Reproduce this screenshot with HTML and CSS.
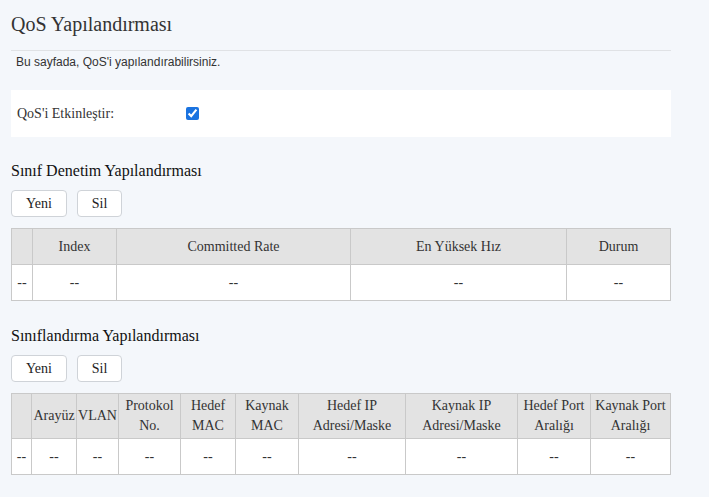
FILE: index.html
```html
<!DOCTYPE html>
<html lang="tr">
<head>
    <meta charset="UTF-8">
    <meta name="viewport" content="width=device-width, initial-scale=1.0">
    <title>QoS Yapılandırması</title>
    <link rel="stylesheet" href="styles.css">
</head>
<body>
    <div class="page">
        <h1 class="page-title">QoS Yapılandırması</h1>
        <p class="page-desc">Bu sayfada, QoS'i yapılandırabilirsiniz.</p>

        <div class="panel">
            <label class="field-label" for="qos-enable">QoS'i Etkinleştir:</label>
            <input type="checkbox" id="qos-enable" checked>
        </div>

        <h2 class="section-title first">Sınıf Denetim Yapılandırması</h2>
        <div class="actions">
            <button type="button" class="btn">Yeni</button>
            <button type="button" class="btn">Sil</button>
        </div>
        <table class="grid">
            <colgroup>
                <col class="w-21">
                <col class="w-84">
                <col class="w-234">
                <col class="w-216">
                <col class="w-104">
            </colgroup>
            <thead>
                <tr>
                    <th></th>
                    <th>Index</th>
                    <th>Committed Rate</th>
                    <th>En Yüksek Hız</th>
                    <th>Durum</th>
                </tr>
            </thead>
            <tbody>
                <tr>
                    <td>--</td>
                    <td>--</td>
                    <td>--</td>
                    <td>--</td>
                    <td>--</td>
                </tr>
            </tbody>
        </table>

        <h2 class="section-title">Sınıflandırma Yapılandırması</h2>
        <div class="actions">
            <button type="button" class="btn">Yeni</button>
            <button type="button" class="btn">Sil</button>
        </div>
        <table class="grid">
            <colgroup>
                <col class="w-20">
                <col class="w-45">
                <col class="w-42">
                <col class="w-62">
                <col class="w-55">
                <col class="w-63">
                <col class="w-107">
                <col class="w-112">
                <col class="w-73">
                <col class="w-80">
            </colgroup>
            <thead>
                <tr>
                    <th></th>
                    <th>Arayüz</th>
                    <th>VLAN</th>
                    <th>Protokol No.</th>
                    <th>Hedef MAC</th>
                    <th>Kaynak MAC</th>
                    <th>Hedef IP Adresi/Maske</th>
                    <th>Kaynak IP Adresi/Maske</th>
                    <th>Hedef Port Aralığı</th>
                    <th>Kaynak Port Aralığı</th>
                </tr>
            </thead>
            <tbody>
                <tr>
                    <td>--</td>
                    <td>--</td>
                    <td>--</td>
                    <td>--</td>
                    <td>--</td>
                    <td>--</td>
                    <td>--</td>
                    <td>--</td>
                    <td>--</td>
                    <td>--</td>
                </tr>
            </tbody>
        </table>
    </div>
</body>
</html>
```

FILE: styles.css
```css
body {
    margin: 0;
    background-color: #f4f7fb;
    color: #333333;
    font-family: "Liberation Serif", "Times New Roman", serif;
}
.page {
    width: 660px;
    padding: 12px 0 0 11px;
}
.page-title {
    margin: 0;
    padding-bottom: 14px;
    font-size: 20px;
    font-weight: normal;
    line-height: 24px;
    border-bottom: 1px solid #e0e2e5;
}
.page-desc {
    margin: 4px 0 0;
    padding-left: 5px;
    font-family: "Liberation Sans", Arial, sans-serif;
    font-size: 12px;
    line-height: 14px;
}
.panel {
    display: flex;
    align-items: center;
    margin-top: 21px;
    height: 47px;
    padding-left: 6px;
    background-color: #ffffff;
}
.field-label {
    width: 169px;
    font-size: 14px;
    line-height: 20px;
}
.panel input {
    width: 13px;
    height: 13px;
    margin: 0;
    accent-color: #1a73e0;
}
.section-title {
    margin: 25px 0 0;
    font-size: 16px;
    font-weight: normal;
    line-height: 20px;
    color: #111111;
}
.section-title.first {
    margin-top: 24px;
}
.actions {
    display: flex;
    gap: 10px;
    margin: 9px 0 11px;
}
.btn {
    height: 27px;
    padding: 0 14px;
    background-color: #ffffff;
    border: 1px solid #cfd3d8;
    border-radius: 4px;
    font-family: "Liberation Serif", "Times New Roman", serif;
    font-size: 14px;
    color: #222222;
}
.grid {
    width: 660px;
    table-layout: fixed;
    border-collapse: collapse;
    background-color: #ffffff;
}
.grid th,
.grid td {
    height: 36px;
    padding: 2px 1px;
    border: 1px solid #c9c9c9;
    font-size: 14px;
    font-weight: normal;
    line-height: 20px;
    text-align: center;
    box-sizing: border-box;
}
.grid th {
    background-color: #e3e3e3;
}
.w-20 { width: 20px; }
.w-21 { width: 21px; }
.w-42 { width: 42px; }
.w-45 { width: 45px; }
.w-55 { width: 55px; }
.w-62 { width: 62px; }
.w-63 { width: 63px; }
.w-73 { width: 73px; }
.w-80 { width: 80px; }
.w-84 { width: 84px; }
.w-104 { width: 104px; }
.w-107 { width: 107px; }
.w-112 { width: 112px; }
.w-216 { width: 216px; }
.w-234 { width: 234px; }
```
